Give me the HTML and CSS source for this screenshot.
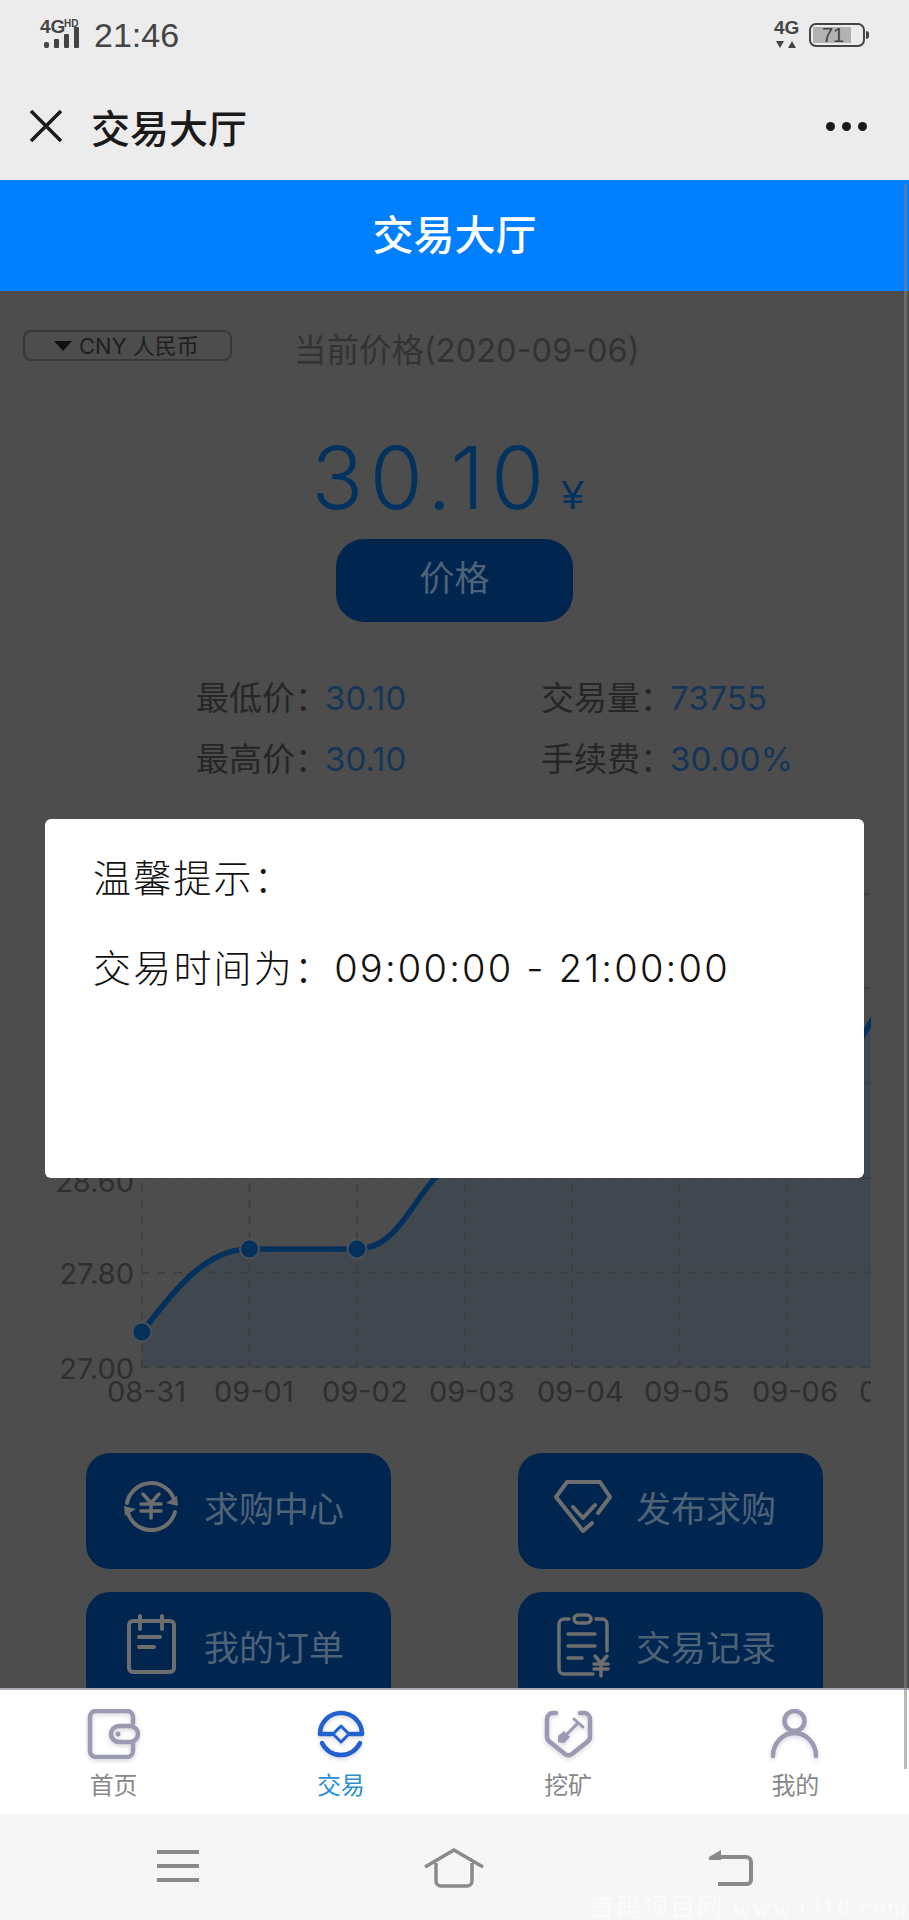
FILE: index.html
```html
<!DOCTYPE html>
<html lang="zh-CN">
  <head>
    <meta charset="UTF-8" />
    <meta name="viewport" content="width=device-width, initial-scale=1.0" />
    <title>交易大厅</title>
    <link rel="stylesheet" href="styles.css">
  </head>
  <body>
    <!-- phone status bar -->
    <div class="status">
      <svg class="status-signal" width="46" height="30" viewBox="0 0 46 30">
        <text x="0" y="14" class="net-big">4G</text>
        <text x="24" y="8" class="net-small">HD</text>
        <rect x="4" y="23" width="5" height="6" rx="2"></rect>
        <rect x="14" y="20" width="5" height="9" rx="1"></rect>
        <rect x="24" y="15" width="5" height="14" rx="1"></rect>
        <rect x="34" y="8" width="5" height="21" rx="1"></rect>
      </svg>
      <span class="status-time">21:46</span>
      <span class="spacer"></span>
      <svg class="status-net" width="24" height="30" viewBox="0 0 24 30">
        <text x="0" y="14" class="net-big">4G</text>
        <path d="M2 21h8l-4 7zM14 28l4-7 4 7z"></path>
      </svg>
      <div class="battery">
        <div class="battery-fill"></div>
        <span class="battery-num">71</span>
      </div>
    </div>

    <!-- webview title bar -->
    <div class="topbar">
      <svg class="close-icon" width="34" height="34" viewBox="0 0 34 34">
        <path d="M2 2l30 30M32 2L2 32"></path>
      </svg>
      <span class="topbar-title">交易大厅</span>
      <span class="spacer"></span>
      <div class="more"><i></i><i></i><i></i></div>
    </div>

    <div class="header">交易大厅</div>

    <div class="main">
      <div class="price-head">
        <div class="currency"><span class="caret"></span>CNY 人民币</div>
        <span class="price-date">当前价格(2020-09-06)</span>
      </div>

      <div class="price">
        <span class="price-num">30.10</span>
        <span class="price-unit">¥</span>
      </div>
      <div class="price-btn">价格</div>

      <div class="stats">
        <div>最低价：<span>30.10</span></div>
        <div>交易量：<span>73755</span></div>
        <div>最高价：<span>30.10</span></div>
        <div>手续费：<span>30.00%</span></div>
      </div>

      <!-- price trend, viewBox follows the page coordinates of the plot -->
      <svg class="chart" width="871" height="560" viewBox="0 860 871 560">
        <path class="area" d="M142 1332C175 1290 205 1249 249.5 1249H357C395 1249 410 1205 435 1178C455 1155 470 1135 500 1120L787 1100C830 1100 850 1060 894 980V1367H142Z"></path>
        <g class="grid">
          <path d="M142 894H871M142 988H871M142 1083H871M142 1178H871M142 1272.5H871M142 1367H871"></path>
          <path d="M142 880V1367M249.5 880V1367M357 880V1367M464.5 880V1367M572 880V1367M679.5 880V1367M787 880V1367"></path>
        </g>
        <path class="line" d="M142 1332C175 1290 205 1249 249.5 1249H357C395 1249 410 1205 435 1178C455 1155 470 1135 500 1120L787 1100C830 1100 850 1060 894 980"></path>
        <circle class="dot" cx="142" cy="1332" r="9.5"></circle>
        <circle class="dot" cx="249.5" cy="1249" r="9.5"></circle>
        <circle class="dot" cx="357" cy="1249" r="9.5"></circle>
        <g class="y-axis">
          <text x="134" y="1192">28.60</text>
          <text x="134" y="1284">27.80</text>
          <text x="134" y="1379">27.00</text>
        </g>
        <g class="x-axis">
          <text x="107" y="1402">08-31</text>
          <text x="214" y="1402">09-01</text>
          <text x="322" y="1402">09-02</text>
          <text x="429" y="1402">09-03</text>
          <text x="537" y="1402">09-04</text>
          <text x="644" y="1402">09-05</text>
          <text x="752" y="1402">09-06</text>
          <text x="859" y="1402">09-07</text>
        </g>
      </svg>

      <div class="actions">
        <div class="action">
          <span class="icon-slot">
            <svg class="action-icon" width="54" height="54" viewBox="0 0 54 54">
              <path d="M3 24A24.5 24.5 0 0 1 50 20M51 33A24.5 24.5 0 0 1 4 34"></path>
              <path class="solid" d="M42 24l11-7 1 10zM12 30L1 37l-1-10z"></path>
              <path class="thin" d="M19 15l8 9 8-9M17 25H37M17 32H37M27 24V39"></path>
            </svg>
          </span>
          求购中心
        </div>
        <div class="action">
          <span class="icon-slot">
            <svg class="action-icon" width="58" height="53" viewBox="0 0 58 53">
              <path d="M44 33L56 17 46 2H13L2 17 29 51l9-8M19 27l10 11 12-13"></path>
            </svg>
          </span>
          发布求购
        </div>
        <div class="action">
          <span class="icon-slot">
            <svg class="action-icon" width="49" height="58" viewBox="0 0 49 58">
              <rect x="2" y="5" width="45" height="51" rx="4"></rect>
              <path d="M13 0v13M35 0v13M12 21H33M12 31H27"></path>
            </svg>
          </span>
          我的订单
        </div>
        <div class="action">
          <span class="icon-slot">
            <svg class="action-icon" width="52" height="62" viewBox="0 0 52 62">
              <path class="thin" d="M12 5H7a5 5 0 0 0-5 5v45a5 5 0 0 0 5 5h29M39 5h6a5 5 0 0 1 5 5v27M11 20H38M11 32H38M11 44H25"></path>
              <rect class="thin" x="17" y="1" width="17" height="8" rx="4"></rect>
              <path class="thin" d="M38 42l6 7 6-7M37 50H51M37 55H51M44 49V62"></path>
            </svg>
          </span>
          交易记录
        </div>
      </div>

      <div class="modal">
        <p class="modal-title">温馨提示：</p>
        <p class="modal-text">交易时间为：09:00:00 - 21:00:00</p>
      </div>
    </div>

    <!-- app tabs -->
    <div class="tabbar">
      <div class="tab">
        <svg class="tab-icon" width="54" height="50" viewBox="0 0 54 50">
          <path d="M46 14V8a6 6 0 0 0-6-6H9a6 6 0 0 0-6 6v34a6 6 0 0 0 6 6h31a6 6 0 0 0 6-6v-8"></path>
          <rect x="24" y="17" width="27" height="16" rx="8"></rect>
          <circle class="solid" cx="31" cy="25" r="2.5"></circle>
        </svg>
        首页
      </div>
      <div class="tab active">
        <svg class="tab-icon" width="54" height="50" viewBox="-3 -1 54 50">
          <path d="M3 24A21 21 0 0 1 45 24H33M3 24H15M5 33A21 21 0 0 0 43 33"></path>
          <path class="thin" d="M24 16l8 8-8 8-8-8z"></path>
        </svg>
        交易
      </div>
      <div class="tab">
        <svg class="tab-icon" width="54" height="50" viewBox="-3 -1 54 50">
          <path d="M12 3H9a6 6 0 0 0-6 6v18a6 6 0 0 0 3 5l15 12a6 6 0 0 0 7 0l15-12a6 6 0 0 0 3-5V9a6 6 0 0 0-6-6h-4"></path>
          <path class="thin" d="M30 9l9 8M34 13L22 25"></path>
          <path class="solid" d="M14 26l6-5 6 6-6 6-6-1z"></path>
        </svg>
        挖矿
      </div>
      <div class="tab">
        <svg class="tab-icon" width="54" height="50" viewBox="-2 0 54 50">
          <circle cx="24.500" cy="12" r="10"></circle>
          <path d="M3 47A21.500 23 0 0 1 46 47"></path>
        </svg>
        我的
      </div>
    </div>

    <!-- system navigation -->
    <div class="sysnav">
      <svg width="44" height="34" viewBox="0 0 44 34">
        <path d="M1 3H43M1 17H43M1 31H43"></path>
      </svg>
      <svg class="home" width="62" height="40" viewBox="0 0 62 40">
        <path d="M2 19L31 2l29 17M13 15v18a5 5 0 0 0 5 5h26a5 5 0 0 0 5-5V15"></path>
      </svg>
      <svg width="46" height="38" viewBox="0 0 46 38">
        <path d="M12 8H38a5 5 0 0 1 5 5v18a4 4 0 0 1-4 4H10"></path>
        <path class="solid" d="M1 8L13 1v10H1z"></path>
      </svg>
    </div>

    <div class="scroll-thumb"></div>
    <div class="site-mark">首码项目网 www.t318.com</div>
  </body>
</html>
```

FILE: styles.css
```css
html,
body {
  margin: 0;
  height: 100%;
}

body {
  position: relative;
  width: 909px;
  height: 1920px;
  display: flex;
  flex-direction: column;
  overflow: hidden;
  font-family: Inter, "Noto Sans CJK SC", sans-serif;
  background-color: #4d4d4d;
}

.spacer {
  flex: 1;
}

/* status bar */
.status {
  height: 90px;
  flex-shrink: 0;
  display: flex;
  align-items: flex-start;
  padding: 0 40px;
  box-sizing: border-box;
  background-color: #ececec;
  color: #444;
}

.status svg {
  fill: #444;
  overflow: visible;
}

.status-signal {
  margin-top: 19px;
}

.status-time {
  margin: 16px 0 0 8px;
  font-family: "Liberation Sans", sans-serif;
  font-size: 34px;
}

.status-net {
  margin-top: 20px;
}

.net-big {
  font-family: "Liberation Sans", sans-serif;
  font-size: 19px;
  font-weight: 700;
}

.net-small {
  font-family: "Liberation Sans", sans-serif;
  font-size: 10px;
  font-weight: 700;
}

.battery {
  position: relative;
  width: 56px;
  height: 24px;
  margin: 23px 4px 0 11px;
  box-sizing: border-box;
  border: 2px solid #444;
  border-radius: 7px;
  display: flex;
  justify-content: center;
  align-items: center;
  font-family: "Liberation Sans", sans-serif;
  font-size: 20px;
}

.battery::after {
  content: "";
  position: absolute;
  right: -6px;
  top: 6px;
  width: 3px;
  height: 8px;
  background-color: #444;
  border-radius: 0 3px 3px 0;
}

.battery-fill {
  position: absolute;
  left: 2px;
  top: 2px;
  bottom: 2px;
  width: 38px;
  background-color: #b2b2b2;
}

.battery-num {
  position: relative;
  margin-right: 8px;
}

/* title bar */
.topbar {
  height: 90px;
  flex-shrink: 0;
  display: flex;
  align-items: center;
  padding: 0 42px 18px 29px;
  box-sizing: border-box;
  background-color: #ececec;
  color: #1a1a1a;
}

.close-icon path {
  fill: none;
  stroke: #1a1a1a;
  stroke-width: 3.5;
}

.topbar-title {
  margin-left: 28px;
  font-size: 39px;
  font-weight: 500;
}

.more {
  display: flex;
  gap: 7px;
}

.more i {
  width: 9px;
  height: 9px;
  border-radius: 50%;
  background-color: #1a1a1a;
}

.header {
  height: 111px;
  flex-shrink: 0;
  box-sizing: border-box;
  padding-bottom: 8px;
  display: flex;
  justify-content: center;
  align-items: center;
  background-color: #0080ff;
  color: #fff;
  font-size: 41px;
  font-weight: 500;
}

/* dimmed page behind the dialog */
.main {
  position: relative;
  flex: 1;
  min-height: 0;
  overflow: hidden;
  background-color: #4d4d4d;
}

.price-head {
  display: flex;
  align-items: center;
  height: 34px;
  padding: 39px 0 0 23px;
}

.currency {
  width: 209px;
  height: 31px;
  box-sizing: border-box;
  margin-top: -3px;
  display: flex;
  align-items: center;
  padding: 0 0 3px 29px;
  border: 2px solid #383838;
  border-radius: 8px;
  color: #1f1f1f;
  font-size: 22px;
}

.caret {
  width: 0;
  height: 0;
  margin: 3px 7px 0 0;
  border-left: 9px solid transparent;
  border-right: 9px solid transparent;
  border-top: 10px solid #111;
}

.price-date {
  margin-left: 62px;
  color: #333;
  font-size: 32.500px;
}

.price {
  display: flex;
  justify-content: center;
  align-items: baseline;
  gap: 11px;
  height: 104px;
  margin-top: 62px;
  padding-right: 14px;
  color: #04325f;
}

.price-num {
  font-size: 86px;
  font-weight: 300;
  line-height: 104px;
  letter-spacing: 6.500px;
}

.price-unit {
  font-family: "Liberation Sans", sans-serif;
  font-size: 40px;
}

.price-btn {
  width: 237px;
  height: 83px;
  margin: 9px auto 0;
  box-sizing: border-box;
  padding-bottom: 10px;
  display: flex;
  justify-content: center;
  align-items: center;
  border-radius: 28px;
  background-color: #00264f;
  color: #4f6378;
  font-size: 35px;
}

.stats {
  display: grid;
  grid-template-columns: 345px auto;
  grid-auto-rows: 61px;
  align-items: center;
  margin-top: 43px;
  padding-left: 196px;
  color: #262626;
  font-size: 33px;
}

.stats span {
  margin-left: -3px;
  color: #163557;
}

.chart {
  display: block;
  margin-top: 73px;
}

.chart text {
  font-family: Inter, sans-serif;
  font-size: 29px;
  fill: #2f2f2f;
}

.area {
  fill: #40474f;
}

.grid path {
  fill: none;
  stroke: #3d3d3d;
  stroke-width: 1.500;
  stroke-dasharray: 8 8;
}

.line {
  fill: none;
  stroke: #04305c;
  stroke-width: 5.500;
}

.dot {
  fill: #04305c;
  stroke: #4b5159;
  stroke-width: 2;
}

.y-axis text {
  text-anchor: end;
}

.actions {
  display: grid;
  grid-template-columns: 305px 305px;
  grid-auto-rows: 116px;
  gap: 23px 127px;
  margin-top: 33px;
  padding-left: 86px;
}

.action {
  display: flex;
  align-items: center;
  box-sizing: border-box;
  padding-bottom: 10px;
  border-radius: 24px;
  background-color: #00264f;
  color: #4f6378;
  font-size: 35px;
}

/* icons of different widths share one centre line */
.icon-slot {
  width: 130px;
  margin-right: -12px;
  flex-shrink: 0;
  display: flex;
  justify-content: center;
}

.action-icon {
  overflow: visible;
  fill: none;
  stroke: #6e6e6e;
  stroke-width: 4;
  stroke-linecap: round;
  stroke-linejoin: round;
}

.action-icon .solid {
  fill: #6e6e6e;
  stroke: none;
}

.action-icon .thin {
  stroke-width: 3.5;
}

/* dialog sits on top of the dimmed page */
.modal {
  position: absolute;
  left: 45px;
  top: 528px;
  width: 819px;
  height: 359px;
  box-sizing: border-box;
  padding: 29px 48px;
  border-radius: 6px;
  background-color: #fff;
  color: #111;
  font-size: 38px;
  font-weight: 300;
  letter-spacing: 2.200px;
}

.modal p {
  margin: 0;
  line-height: 60px;
}

.modal .modal-text {
  margin-top: 30px;
}

/* bottom tabs */
.tabbar {
  height: 126px;
  flex-shrink: 0;
  display: grid;
  grid-template-columns: repeat(4, 1fr);
  box-sizing: border-box;
  border-top: 2px solid #a9aeb5;
  background-color: #fff;
}

.tab {
  display: flex;
  flex-direction: column;
  align-items: center;
  padding-top: 19px;
  color: #888;
  font-size: 24px;
  line-height: 34px;
}

.tab.active {
  color: #2b8fd3;
}

.tab-icon {
  margin-bottom: 10px;
  fill: none;
  stroke: #9b9ab3;
  stroke-width: 4.500;
  stroke-linecap: round;
  stroke-linejoin: round;
  filter: drop-shadow(0 2px 2px rgba(90, 90, 120, 0.25));
}

.tab.active .tab-icon {
  stroke: #2060cf;
}

.tab-icon .solid {
  fill: #9b9ab3;
  stroke: none;
}

.tab-icon .thin {
  stroke-width: 3;
}

/* android nav buttons */
.sysnav {
  height: 106px;
  flex-shrink: 0;
  box-sizing: border-box;
  display: flex;
  align-items: flex-start;
  justify-content: space-between;
  padding: 35px 155px 0 156px;
  background-color: #f6f6f6;
}

.sysnav svg {
  fill: none;
  stroke: #8a8a8a;
  stroke-width: 4;
}

.sysnav .home {
  margin-top: -1px;
  stroke-width: 3.5;
}

.sysnav .solid {
  fill: #8a8a8a;
  stroke: none;
}

.scroll-thumb {
  position: absolute;
  right: 2px;
  top: 184px;
  width: 3px;
  height: 1585px;
  background-color: rgba(130, 130, 130, 0.55);
}

.site-mark {
  position: absolute;
  right: 0;
  bottom: -3px;
  color: rgba(255, 255, 255, 0.6);
  font-family: "Liberation Serif", "Noto Sans CJK SC", serif;
  font-size: 25px;
  letter-spacing: 2px;
  white-space: nowrap;
}
```
